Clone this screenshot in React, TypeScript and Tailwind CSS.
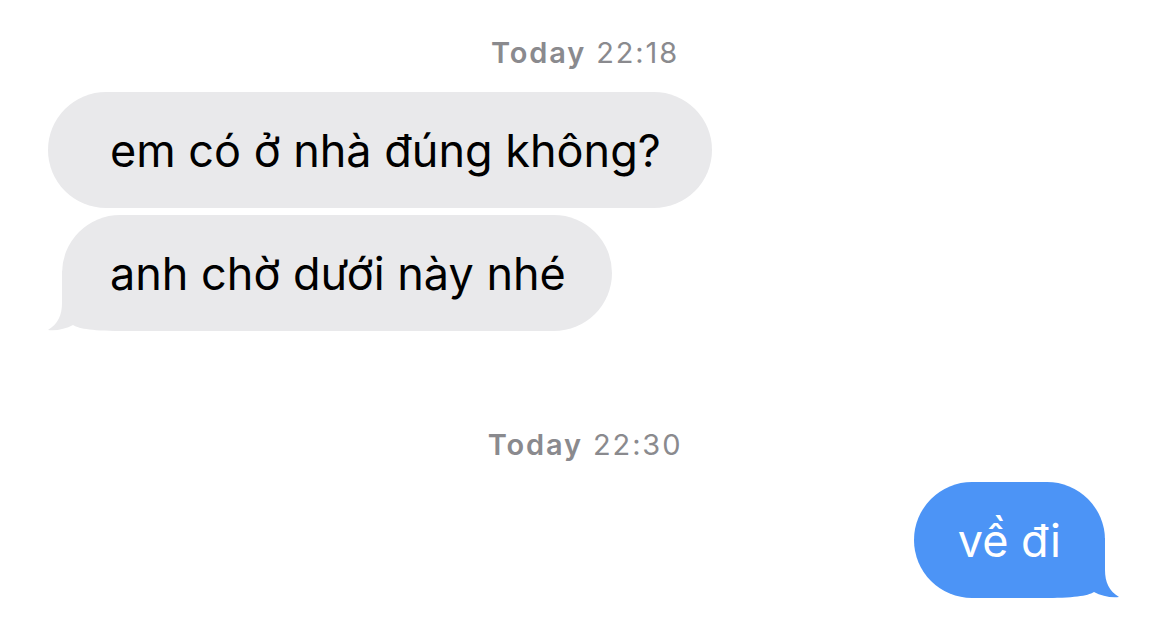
const font = { fontFamily: "Inter, 'Noto Sans', 'Liberation Sans', sans-serif" };

type Side = "in" | "out";

function Tail({ side, color }: { side: Side; color: string }) {
  // the little hook under the last bubble of a group
  return (
    <svg
      width="80"
      height="60"
      viewBox="0 0 80 60"
      className={
        side === "in"
          ? "absolute bottom-0 left-[-15px]"
          : "absolute bottom-0 right-[-15px] -scale-x-100"
      }
    >
      <path
        d="M15 0 L15 32 C15 44 11 53 1 59 C9 60 19 58 26 54 C33 58 45 60 80 60 L80 0 Z"
        fill={color}
      />
    </svg>
  );
}

function Stamp({ time }: { time: string }) {
  return (
    <p className="text-center text-[29px] leading-none tracking-[0.065em] text-[#8a8a8e]" style={font}>
      <span className="font-semibold">Today</span> {time}
    </p>
  );
}

type BubbleProps = {
  text: string;
  side: Side;
  tail?: boolean;
  className?: string;
};

function Bubble({ text, side, tail, className }: BubbleProps) {
  const color = side === "in" ? "#e9e9eb" : "#4c94f6";
  return (
    <div
      className={`relative flex h-[116px] items-center rounded-[58px] text-[45px] leading-none ${
        side === "in" ? "bg-[#e9e9eb] text-black" : "bg-[#4c94f6] text-white"
      } ${className ?? ""}`}
      style={font}
    >
      <span className="relative z-10">{text}</span>
      {tail && <Tail side={side} color={color} />}
    </div>
  );
}

export default function App() {
  return (
    <div className="flex h-[621px] w-[1170px] flex-col bg-white">
      <div className="pt-[38px]">
        <Stamp time="22:18" />
      </div>
      <div className="mt-[25px] flex flex-col items-start gap-[7px]">
        <Bubble side="in" text="em có ở nhà đúng không?" className="ml-[48px] pl-[62px] pr-[51px]" />
        <Bubble side="in" tail text="anh chờ dưới này nhé" className="ml-[62px] pl-[48px] pr-[46px]" />
      </div>
      <div className="mt-[99px]">
        <Stamp time="22:30" />
      </div>
      <div className="mt-[23px] flex justify-end">
        <Bubble side="out" tail text="về đi" className="mr-[65px] pl-[44px] pr-[44px]" />
      </div>
    </div>
  );
}
